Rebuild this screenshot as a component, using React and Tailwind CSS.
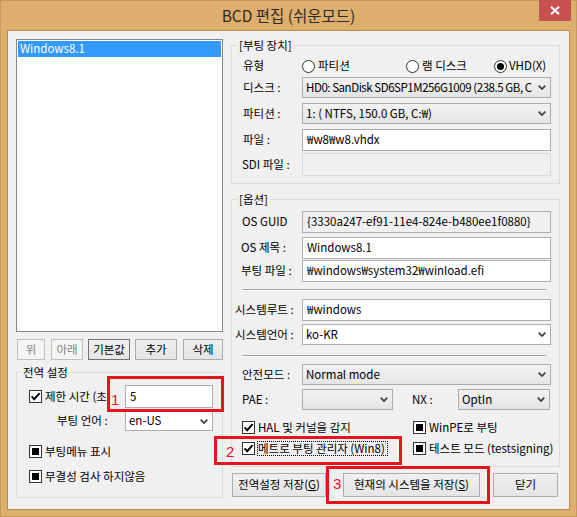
import React from "react";

const Chevron = () => (
  <svg width="8" height="5" viewBox="0 0 8 5" className="shrink-0 mr-[4px]">
    <path d="M0.7 0.7 L4 4 L7.3 0.7" fill="none" stroke="#3c3c3c" strokeWidth="1.7" />
  </svg>
);

function Combo({ value, white = false, w = "w-[249px]", textClass = "" }) {
  const skin = white
    ? "bg-white border-[#ABADB3]"
    : "bg-linear-to-b from-[#F2F2F2] to-[#E5E5E5] border-[#ACACAC]";
  return (
    <div className={`${w} h-full flex items-center border ${skin}`}>
      <span className={`flex-1 min-w-0 pl-[3px] whitespace-nowrap overflow-hidden ${textClass}`}>{value}</span>
      <Chevron />
    </div>
  );
}

function TextBox({ value = "", variant = "normal", w = "w-[249px]" }) {
  const skin =
    variant === "readonly"
      ? "bg-[#F0F0F0] border-[#ABADB3]"
      : variant === "disabled"
      ? "bg-[#F0F0F0] border-[#D9D9D9]"
      : "bg-white border-[#ABADB3]";
  return (
    <div className={`${w} h-full flex items-center border ${skin}`}>
      <span className="pl-[4px] whitespace-nowrap overflow-hidden">{value}</span>
    </div>
  );
}

function Check({ state = "checked" }) {
  return (
    <span className="w-[13px] h-[13px] shrink-0 border border-[#333333] bg-white flex items-center justify-center">
      {state === "checked" ? (
        <svg width="11" height="11" viewBox="0 0 11 11">
          <path d="M1.6 5.4 L4.2 8.2 L9.6 2.2" fill="none" stroke="#000" strokeWidth="2" />
        </svg>
      ) : (
        <span className="w-[7px] h-[7px] bg-black" />
      )}
    </span>
  );
}

function Radio({ checked = false }) {
  return (
    <span className="w-[13px] h-[13px] shrink-0 rounded-full border border-[#333333] bg-white flex items-center justify-center">
      {checked && <span className="w-[7px] h-[7px] rounded-full bg-black" />}
    </span>
  );
}

function Btn({ children, w, disabled = false, hot = false, ml = "" }) {
  const skin = disabled
    ? "border-[#BFBFBF] text-[#838383] bg-[#F4F4F4]"
    : hot
    ? "border-[#707070] bg-linear-to-b from-[#F0F0F0] to-[#E5E5E5]"
    : "border-[#ACACAC] bg-linear-to-b from-[#F0F0F0] to-[#E5E5E5]";
  return (
    <div className={`${w} ${ml} h-full border flex items-center justify-center whitespace-nowrap ${skin}`}>
      {children}
    </div>
  );
}

function Row({ label, pl, mt, h, children }) {
  return (
    <div className={`flex items-center ${mt} ${h}`}>
      <div className={`w-[70px] shrink-0 whitespace-nowrap ${pl}`}>{label}</div>
      {children}
    </div>
  );
}

export default function App() {
  return (
    <div className="relative w-[577px] h-[517px] overflow-hidden font-['Noto_Sans_CJK_KR','Noto_Sans',sans-serif] text-[11.5px] text-black">
      <div className="w-full h-full bg-[#DEAE6C] border border-[#C6985D] flex flex-col px-[6px] pb-[6px]">
        {/* title bar */}
        <div className="h-[29px] shrink-0 flex items-center justify-center text-[15.5px] text-[#2B2B2B]">
          BCD 편집 (쉬운모드)
        </div>

        {/* client area */}
        <div className="flex-1 border border-[#B48A56] bg-[#F0F0F0] flex">
          {/* left column */}
          <div className="ml-[8px] mt-[8px] w-[207px] shrink-0 flex flex-col">
            <div className="h-[293px] border border-[#828790] bg-white p-[1px]">
              <div className="h-[16px] bg-[#3399FF] text-white pl-[2px] flex items-center">Windows8.1</div>
            </div>

            <div className="mt-[7px] h-[21px] flex">
              <Btn w="w-[28px]" ml="ml-[1px]" disabled>위</Btn>
              <Btn w="w-[32px]" ml="ml-[6px]" disabled>아래</Btn>
              <Btn w="w-[42px]" ml="ml-[5px]" hot>기본값</Btn>
              <Btn w="w-[42px]" ml="ml-[5px]">추가</Btn>
              <Btn w="w-[40px]" ml="ml-[6px]">삭제</Btn>
            </div>

            <fieldset className="mt-[4px] border border-[#DCDCDC] pb-[12px] min-w-0">
              <legend className="ml-[4px] px-[2px] leading-[16px]">전역 설정</legend>
              <div className="mt-[5px] h-[23px] flex items-center">
                <span className="ml-[12px]"><Check /></span>
                <span className="ml-[3px] flex-1 whitespace-nowrap">제한 시간 (초)</span>
                <div className="w-[88px] mr-[9px] h-full">
                  <TextBox value="5" w="w-[88px]" />
                </div>
              </div>
              <div className="mt-[3px] h-[20px] flex items-center">
                <span className="pl-[40px] flex-1 whitespace-nowrap">부팅 언어 :</span>
                <div className="w-[88px] mr-[9px] h-full">
                  <Combo value="en-US" white w="w-[88px]" />
                </div>
              </div>
              <div className="mt-[12px] h-[17px] flex items-center">
                <span className="ml-[12px]"><Check state="square" /></span>
                <span className="ml-[3px] whitespace-nowrap">부팅메뉴 표시</span>
              </div>
              <div className="mt-[8px] h-[17px] flex items-center">
                <span className="ml-[12px]"><Check state="square" /></span>
                <span className="ml-[3px] whitespace-nowrap">무결성 검사 하지않음</span>
              </div>
            </fieldset>
          </div>

          {/* right column */}
          <div className="ml-[8px] w-[329px] shrink-0 flex flex-col">
            <fieldset className="mt-[6px] border border-[#DCDCDC] pb-[7px] min-w-0">
              <legend className="ml-[5px] px-[2px] leading-[16px]">[부팅 장치]</legend>
              <Row label="유형" pl="pl-[11px]" mt="mt-[3px]" h="h-[20px]">
                <div className="w-[249px] flex items-center">
                  <div className="w-[104px] flex items-center">
                    <Radio />
                    <span className="ml-[3px]">파티션</span>
                  </div>
                  <div className="w-[88px] flex items-center">
                    <Radio />
                    <span className="ml-[3px]">램 디스크</span>
                  </div>
                  <div className="flex items-center">
                    <Radio checked />
                    <span className="ml-[2px]">VHD(X)</span>
                  </div>
                </div>
              </Row>
              <Row label="디스크 :" pl="pl-[11px]" mt="mt-[1px]" h="h-[21px]">
                <Combo value="HD0: SanDisk SD6SP1M256G1009 (238.5 GB, C" textClass="tracking-[-0.45px]" />
              </Row>
              <Row label="파티션 :" pl="pl-[11px]" mt="mt-[5px]" h="h-[21px]">
                <Combo value="1: ( NTFS, 150.0 GB, C:₩)" />
              </Row>
              <Row label="파일 :" pl="pl-[11px]" mt="mt-[5px]" h="h-[22px]">
                <TextBox value="₩w8₩w8.vhdx" />
              </Row>
              <Row label="SDI 파일 :" pl="pl-[10px]" mt="mt-[2px]" h="h-[23px]">
                <TextBox variant="disabled" />
              </Row>
            </fieldset>

            <fieldset className="mt-[7px] border border-[#DCDCDC] pb-[9px] min-w-0">
              <legend className="ml-[5px] px-[2px] leading-[16px]">[옵션]</legend>
              <Row label="OS GUID" pl="pl-[10px]" mt="mt-[4px]" h="h-[22px]">
                <TextBox value="{3330a247-ef91-11e4-824e-b480ee1f0880}" variant="readonly" />
              </Row>
              <Row label="OS 제목 :" pl="pl-[9px]" mt="mt-[4px]" h="h-[22px]">
                <TextBox value="Windows8.1" />
              </Row>
              <Row label="부팅 파일 :" pl="pl-[9px]" mt="mt-[1px]" h="h-[22px]">
                <TextBox value="₩windows₩system32₩winload.efi" />
              </Row>
              <div className="mt-[7px] ml-[10px] mr-[13px] h-[2px] border-t border-[#A0A0A0] border-b border-b-white" />
              <Row label="시스템루트 :" pl="pl-[3px]" mt="mt-[8px]" h="h-[22px]">
                <TextBox value="₩windows" />
              </Row>
              <Row label="시스템언어 :" pl="pl-[3px]" mt="mt-[3px]" h="h-[21px]">
                <Combo value="ko-KR" white />
              </Row>
              <div className="mt-[10px] ml-[10px] mr-[13px] h-[2px] border-t border-[#A0A0A0] border-b border-b-white" />
              <Row label="안전모드 :" pl="pl-[10px]" mt="mt-[7px]" h="h-[21px]">
                <Combo value="Normal mode" />
              </Row>
              <Row label="PAE :" pl="pl-[10px]" mt="mt-[4px]" h="h-[21px]">
                <Combo value="" w="w-[91px]" />
                <span className="ml-[19px] w-[46px] shrink-0">NX :</span>
                <Combo value="OptIn" w="w-[92px]" />
              </Row>
              <div className="mt-[9px] h-[17px] pl-[10px] flex items-center">
                <div className="w-[171px] flex items-center">
                  <Check />
                  <span className="ml-[3px] whitespace-nowrap">HAL 및 커널을 감지</span>
                </div>
                <Check state="square" />
                <span className="ml-[3px] whitespace-nowrap">WinPE로 부팅</span>
              </div>
              <div className="mt-[4px] h-[17px] pl-[10px] flex items-center">
                <div className="w-[171px] flex items-center">
                  <Check />
                  <span className="ml-[2px] border border-dotted border-black pr-[2px] leading-[13px] whitespace-nowrap">
                    메트로 부팅 관리자 (Win8)
                  </span>
                </div>
                <Check state="square" />
                <span className="ml-[3px] whitespace-nowrap">테스트 모드 (testsigning)</span>
              </div>
            </fieldset>

            <div className="mt-[6px] h-[24px] flex">
              <Btn w="w-[94px]" ml="ml-[1px]">
                <span>전역설정 저장(<span className="underline">G</span>)</span>
              </Btn>
              <Btn w="w-[137px]" ml="ml-[17px]">
                <span>현재의 시스템을 저장(<span className="underline">S</span>)</span>
              </Btn>
              <Btn w="w-[65px]" ml="ml-[13px]">닫기</Btn>
            </div>
          </div>
        </div>
      </div>

      {/* caption close button */}
      <div className="absolute left-[539px] top-0 w-[32px] h-[21px] bg-[#C75050] flex items-center justify-center">
        <svg width="10" height="9" viewBox="0 0 10 9">
          <path d="M1 0.8 L9 8.2 M9 0.8 L1 8.2" stroke="#fff" strokeWidth="2" />
        </svg>
      </div>

      {/* red annotations */}
      <div className="absolute left-[107px] top-[376px] w-[117px] h-[36px] border-[3px] border-[#E8141D]" />
      <div className="absolute left-[111px] top-[392px] text-[15px] leading-none text-[#E8141D] font-['Liberation_Sans',sans-serif]">1</div>
      <div className="absolute left-[214px] top-[436px] w-[188px] h-[29px] border-[3px] border-[#E8141D]" />
      <div className="absolute left-[226px] top-[444px] text-[15px] leading-none text-[#E8141D] font-['Liberation_Sans',sans-serif]">2</div>
      <div className="absolute left-[326px] top-[466px] w-[164px] h-[38px] border-[3px] border-[#E8141D]" />
      <div className="absolute left-[333px] top-[476px] text-[15px] leading-none text-[#E8141D] font-['Liberation_Sans',sans-serif]">3</div>
    </div>
  );
}
